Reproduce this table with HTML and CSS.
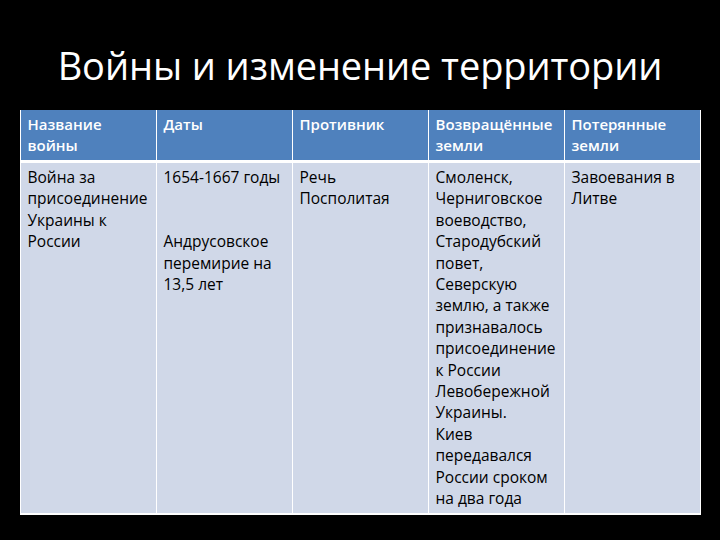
FILE: index.html
```html
<!DOCTYPE html>
<html lang="ru">
<head>
<meta charset="utf-8">
<link rel="stylesheet" href="styles.css">
</head>
<body>
<div class="slide">
  <h1 class="title">Войны и изменение территории</h1>
  <table class="grid">
    <thead>
      <tr>
        <th>Название<br>войны</th>
        <th>Даты</th>
        <th>Противник</th>
        <th>Возвращённые<br>земли</th>
        <th>Потерянные<br>земли</th>
      </tr>
    </thead>
    <tbody>
      <tr>
        <td class="lines">Война за<br>присоединение<br>Украины к<br>России</td>
        <td class="lines">1654-1667 годы<br><br><br>Андрусовское<br>перемирие на<br>13,5 лет</td>
        <td class="lines">Речь<br>Посполитая</td>
        <td class="lines">Смоленск,<br>Черниговское<br>воеводство,<br>Стародубский<br>повет,<br>Северскую<br>землю, а также<br>признавалось<br>присоединение<br>к России<br>Левобережной<br>Украины.<br>Киев<br>передавался<br>России сроком<br>на два года</td>
        <td class="lines">Завоевания в<br>Литве</td>
      </tr>
    </tbody>
  </table>
</div>
</body>
</html>
```
FILE: styles.css
```css
html, body {
  margin: 0;
  padding: 0;
  background: #000;
}
.slide {
  width: 720px;
  height: 540px;
  display: flex;
  flex-direction: column;
  align-items: center;
  background: #000;
  font-family: "Open Sans", "Liberation Sans", sans-serif;
}
.title {
  margin: 0;
  padding-top: 41px;
  height: 69px;
  box-sizing: content-box;
  font-weight: normal;
  font-size: 38px;
  line-height: 48px;
  color: #fff;
  letter-spacing: -0.1px;
}
.grid {
  width: 681px;
  border-collapse: collapse;
  table-layout: fixed;
  font-size: 15.5px;
  line-height: 21.4px;
}
.grid th, .grid td {
  width: 20%;
  text-align: left;
  vertical-align: top;
  padding: 4px 3px 2px 7px;
  border-left: 1px solid #fff;
  border-right: 1px solid #fff;
  white-space: nowrap;
  overflow: hidden;
}
.grid th {
  background: #4f81bd;
  color: #fff;
  font-weight: 600;
  font-size: 15px;
  height: 44px;
  border-bottom: 3px solid #fff;
}
.grid td {
  background: #d0d8e8;
  color: #000;
  height: 344px;
  border-bottom: 2px solid #fff;
}
```
